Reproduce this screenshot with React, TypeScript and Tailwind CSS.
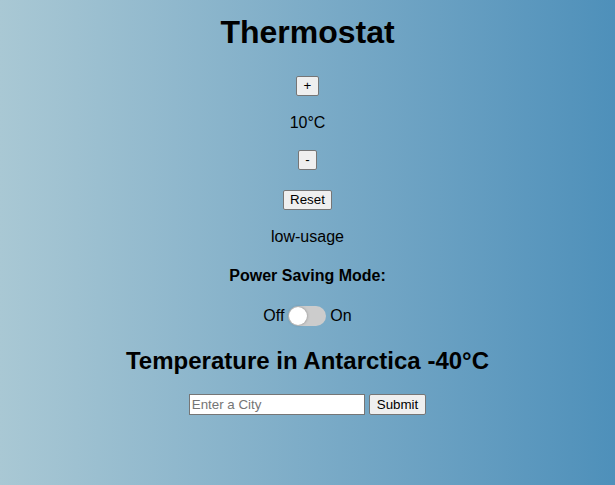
import React, { useState } from 'react';

const btn =
    'h-[20px] px-[6px] border border-[#767676] bg-[#efefef] rounded-[2px] text-[13.33px] leading-[16px] text-black';

export default function App() {
    const [temp, setTemp] = useState(10);
    const [saving, setSaving] = useState(false);

    return (
        <div className="min-h-screen w-full bg-linear-to-r from-[#a9c8d4] to-[#4e90ba] font-['Liberation_Sans',Arial,sans-serif] text-black flex flex-col items-center">
            <h1 className="mt-[14px] text-[32px] leading-[37px] font-bold">Thermostat</h1>

            <button className={`${btn} mt-[25px] px-[7px]`} onClick={() => setTemp(temp + 1)}>+</button>
            <div className="mt-[18px] text-[16px] leading-[18px]">{temp}°C</div>
            <button className={`${btn} mt-[18px]`} onClick={() => setTemp(temp - 1)}>-</button>
            <button className={`${btn} mt-[20px]`} onClick={() => setTemp(20)}>Reset</button>

            <div className="mt-[18px] text-[16px] leading-[18px]">low-usage</div>
            <div className="mt-[21px] text-[16px] leading-[18px] font-bold">Power Saving Mode:</div>

            <div className="mt-[21px] flex items-center h-[20px] text-[16px] leading-[18px]">
                <span>Off</span>
                <button
                    onClick={() => setSaving(!saving)}
                    className={`mx-[4px] w-[38px] h-[20px] rounded-full bg-[#cccccc] flex items-center px-[1px] ${saving ? 'justify-end' : 'justify-start'}`}
                >
                    <span className="block w-[18px] h-[18px] rounded-full bg-white shadow-[0_0_3px_rgba(0,0,0,0.35)]" />
                </button>
                <span>On</span>
            </div>

            <h2 className="mt-[21px] text-[24px] leading-[28px] font-bold">Temperature in Antarctica -40°C</h2>

            <div className="mt-[19px] flex items-center gap-[4px]">
                <input
                    placeholder="Enter a City"
                    className="w-[176px] h-[21px] border border-[#767676] bg-white px-[2px] text-[13.33px] placeholder:text-[#757575] outline-none"
                />
                <button className={`${btn} h-[21px] px-[7px]`}>Submit</button>
            </div>
        </div>
    );
}
